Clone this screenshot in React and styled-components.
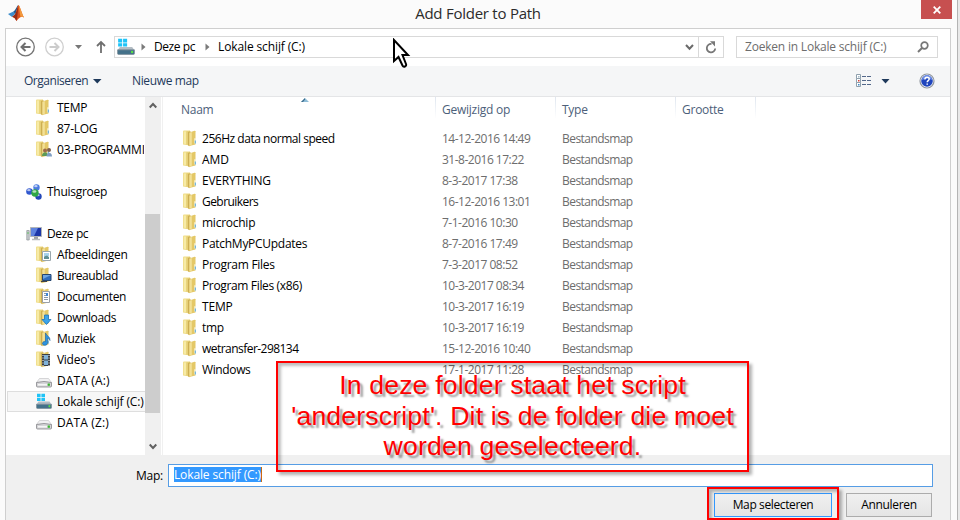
import React from 'react';
import styled, { createGlobalStyle, css } from 'styled-components';

const Global = createGlobalStyle`
  * { box-sizing: border-box; }
  body { margin: 0; overflow: hidden; }
`;

const Screen = styled.div`
  position: relative;
  width: 960px;
  height: 520px;
  overflow: hidden;
  display: flex;
  background: #e9e9e9;
  font-family: 'Open Sans', 'Noto Sans', sans-serif;
  font-size: 12px;
  line-height: 16px;
  letter-spacing: -0.25px;
  color: #000;
  white-space: nowrap;
`;
const Frame = styled.div`
  width: 958px;
  height: 520px;
  padding: 0 6px 0 5px;
  background: #fbfbfb;
  border-right: 1px solid #b4b4b4;
`;
const TitleBar = styled.header`
  display: grid;
  grid-template-columns: 30px 1fr 30px;
  height: 28px;
`;
const Logo = styled.svg`
  margin: 4px 0 0 2px;
`;
const Title = styled.h1`
  margin: 0;
  padding-top: 3px;
  text-align: center;
  font-size: 15px;
  line-height: 20px;
  font-weight: 400;
  letter-spacing: -0.25px;
  color: #2b2b2b;
`;
const CloseButton = styled.button`
  display: flex;
  align-items: center;
  justify-content: center;
  width: 31px;
  height: 19px;
  padding: 0;
  border: 0;
  background: #c75050;
`;
const Body = styled.div`
  display: flex;
  flex-direction: column;
  height: 492px;
  border: 1px solid #cfcfcf;
  border-bottom: 0;
  background: #fff;
`;
const NavBar = styled.nav`
  display: flex;
  height: 37px;
  padding: 7px 12px 0 10px;
`;
const NavIcons = styled.div`
  display: flex;
  width: 98px;
  height: 22px;
`;
const AddressBar = styled.div`
  display: flex;
  align-items: center;
  width: 610px;
  height: 22px;
  border: 1px solid #d9d9d9;
`;
const Crumb = styled.span`
  width: ${(p) => p.$w}px;
  margin-left: 8px;
  letter-spacing: ${(p) => p.$track || -0.25}px;
`;
const Chevron = styled.svg`
  flex: none;
  margin-left: ${(p) => p.$ml || 0}px;
`;
const RefreshBox = styled.div`
  display: flex;
  align-items: center;
  justify-content: center;
  width: 25px;
  height: 20px;
  margin-left: 4px;
  border-left: 1px solid #d9d9d9;
`;
const SearchBox = styled.div`
  display: flex;
  justify-content: space-between;
  align-items: center;
  width: 202px;
  height: 22px;
  margin-left: 12px;
  padding: 0 8px 0 8px;
  border: 1px solid #d9d9d9;
  letter-spacing: -0.2px;
  color: #6d6d6d;
`;
const ToolBar = styled.div`
  display: flex;
  align-items: center;
  height: 31px;
  padding: 0 15px 0 18px;
  background: #f5f6f7;
  border-bottom: 1px solid #e4e5e7;
  color: #1e395b;
`;
const ToolText = styled.span`
  width: ${(p) => p.$w}px;
  letter-spacing: ${(p) => p.$track}px;
`;
const ToolRight = styled.div`
  display: flex;
  align-items: center;
  margin-left: auto;
`;
const Panes = styled.main`
  display: flex;
  height: 358px;
`;
const Tree = styled.aside`
  width: 139px;
  overflow: hidden;
`;
const TreeRow = styled.div`
  display: flex;
  align-items: center;
  gap: ${(p) => (p.$root ? 4 : 5)}px;
  height: 21px;
  margin-left: 1px;
  padding-left: ${(p) => (p.$root ? 18 : 28)}px;
  border: 1px solid transparent;
  overflow: hidden;
  letter-spacing: ${(p) => p.$track || -0.28}px;
  ${(p) => p.$selected && css`
    background: #f7f7f7;
    border-color: #dedede;
    border-right: 0;
  `}
`;
const Gap = styled.div`
  height: 21px;
`;
const ScrollBar = styled.div`
  display: flex;
  flex-direction: column;
  align-items: center;
  width: 16px;
  padding: 5px 0;
  background: #f0f0f0;
`;
const Thumb = styled.div`
  width: 15px;
  height: 199px;
  margin: 105px 1px auto 0;
  background: #cdcdcd;
`;
const List = styled.section`
  flex: 1;
  margin-left: 1px;
  border-left: 1px solid #f0f0f0;
`;
const columns = css`
  display: grid;
  grid-template-columns: 273px 120px 120px 80px;
`;
const HeadRow = styled.div`
  ${columns}
  height: 31px;
  color: #4c607a;
`;
const HeadCell = styled.div`
  position: relative;
  height: 22px;
  padding: 5px 0 0 ${(p) => (p.$first ? 18 : 6)}px;
  background: linear-gradient(#dfe6ef, #fff) right / 1px 100% no-repeat;
`;
const SortMark = styled.svg`
  position: absolute;
  left: 138px;
  top: 1px;
`;
const Row = styled.div`
  ${columns}
  align-items: center;
  height: 21px;
`;
const NameCell = styled.div`
  display: flex;
  align-items: center;
  gap: 4px;
  padding-left: 20px;
  letter-spacing: ${(p) => p.$track || -0.28}px;
`;
const Cell = styled.div`
  padding-left: 6px;
  letter-spacing: ${(p) => p.$track}px;
  color: #6d6d6d;
`;
const Footer = styled.footer`
  flex: 1;
  background: #f0f0f0;
  padding-top: 9px;
`;
const Field = styled.label`
  display: flex;
  align-items: center;
  gap: 5px;
  padding-left: 130px;
`;
const Input = styled.div`
  display: flex;
  align-items: flex-start;
  width: 765px;
  height: 23px;
  padding: 2px 5px;
  background: #fff;
  border: 1px solid #569de5;
`;
const Selected = styled.span`
  height: 15px;
  line-height: 16px;
  background: #3399ff;
  border-right: 1px solid #c96a11;
  letter-spacing: -0.12px;
  color: #fff;
`;
const Buttons = styled.div`
  display: flex;
  gap: 14px;
  margin: 6px 0 0 708px;
`;
const Button = styled.button`
  width: ${(p) => p.$w}px;
  height: 24px;
  padding: 0;
  font: inherit;
  letter-spacing: ${(p) => (p.$primary ? -0.38 : -0.34)}px;
  color: #000;
  border: 1px solid ${(p) => (p.$primary ? '#3399ff' : '#acacac')};
  background: linear-gradient(#f0f0f0, #e5e5e5);
`;
const Callout = styled.div`
  position: absolute;
  left: 276px;
  top: 361px;
  width: 473px;
  height: 111px;
  padding-top: 7px;
  border: 2px solid #f00;
  box-shadow: 3px 3px 3px rgba(0, 0, 0, 0.3), inset 3px 3px 3px rgba(0, 0, 0, 0.25);
  font: 26.7px/30.5px 'Liberation Sans', Arial, sans-serif;
  letter-spacing: 0.13px;
  text-align: center;
  color: #f00;
  text-shadow: 3px 3px 2px rgba(0, 0, 0, 0.38);
`;
const Highlight = styled.div`
  position: absolute;
  left: 707px;
  top: 487px;
  width: 132px;
  height: 33px;
  border: 2px solid #f00;
  box-shadow: 3px 3px 3px rgba(0, 0, 0, 0.3), inset 3px 3px 3px rgba(0, 0, 0, 0.25);
`;
const Pointer = styled.svg`
  position: absolute;
  left: 392px;
  top: 38px;
`;
const Icon = styled.svg`
  flex: none;
  display: block;
`;

const FolderBase = () => (
  <>
    <path d="M0 1.300Q0 .5 1 .5h6v15L0 14.500z" fill="#efdc88" />
    <path d="M.8 1.500h2.500v12.600l-2.500-.4z" fill="#f7eba6" />
    <path d="M3.300 1.500L6.500.8v14.500l-3.200-.8z" fill="#e6cf75" />
    <path d="M5 2.300L7.500 1v14l-1.300 1.200L5 15.300z" fill="#cdae52" />
    <path d="M6.200 2.500L11.500.7q1-.2 1 .6v13.200l-6.300 1.600z" fill="#e4c867" />
    <path d="M6.500 3l2.300-.9v12.700l-2.300.6z" fill="#f2e097" />
    <path d="M11.300 8.300h1.500v5.200h-1.500z" fill="#faf5de" />
    <path d="M11.800 10.500h1v3h-1z" fill="#55a8df" />
  </>
);

const overlays = {
  people: (
    <>
      <circle cx="9" cy="9.500" r="2" fill="#9b6b48" /><path d="M6 15c0-5 6-5 6 0z" fill="#5c9a56" />
      <circle cx="13" cy="9" r="2" fill="#80604a" /><path d="M10.500 15.500c0-5 5.500-5 5.500 0z" fill="#7f9fc4" />
    </>
  ),
  picture: (
    <><path d="M6.500 5.500h8v9h-8z" fill="#fff" stroke="#9aa7ad" /><path d="M8 7h5v3H8z" fill="#a9d3ec" /><path d="M8 10.500l3-1 2 1.500v2H8z" fill="#5f9095" /></>
  ),
  desktop: (
    <><path d="M6.500 7.500h8.500v6H6.500z" fill="#2f6cbd" stroke="#24456f" /><path d="M7 8h8l-8 4z" fill="#6ea6e2" /><path d="M5 14.500h6" stroke="#444" /></>
  ),
  document: (
    <><path d="M6.500 3.500h7v11h-7z" fill="#fff" stroke="#9aa0a6" /><path d="M8 5.500h2M8 7.500h4M8 9.500h4M8 11.500h4" stroke="#8b98a6" /><path d="M10 5h2v3h-2z" fill="#3f86d4" /></>
  ),
  download: <path d="M8.500 6h4v4.500H15L10.500 15.500 6 10.500h2.500z" fill="#3ba4ea" stroke="#1c72b8" strokeWidth=".8" />,
  music: <path d="M9.500 3c1 3 5 3.500 4.500 7.500-1-1.500-1.500-2-2.500-2V13c0 3-5.500 3-5 .2.300-1.700 2-1.900 3-1.700z" fill="#2d93df" stroke="#17609f" strokeWidth=".6" />,
  video: (
    <><path d="M6 3h8v12H6z" fill="#3b4045" /><path d="M8 4h4v4.500H8zM8 9.500h4V14H8z" fill="#7fb2d9" /><path d="M7 4v11M13 4v11" stroke="#fff" strokeDasharray="1 1.500" /></>
  ),
};

const Folder = ({ kind }) => (
  <Icon width={kind ? 16 : 15} height="17" viewBox={kind ? '0 0 16 17' : '0 0 15 17'}>
    <FolderBase />
    {overlays[kind]}
  </Icon>
);

const Drive = ({ system, size = 16 }) => (
  <Icon width={size > 16 ? 18 : 16} height={size > 16 ? 18 : 17} viewBox="0 0 16 17" preserveAspectRatio="none">
    {system ? (
      <>
        <path d="M1 0.800h3.600v3.400H1zM5.400.8H9v3.400H5.400zM1 5h3.600v3H1zM5.400 5H9v3H5.400z" fill="#1fc3f7" />
        <path d="M2.500 8.500h11l2 3H.5z" fill="#b4bdc4" />
        <path d="M.5 11.200h15v3.600q0 .7-1 .7h-13q-1 0-1-.7z" fill="#44718a" stroke="#7d8d98" strokeWidth=".7" />
        <path d="M12.500 12.200h1.800v2h-1.800z" fill="#58e045" />
      </>
    ) : (
      <>
        <path d="M3.500 6.500h9l3 4h-15z" fill="#f1f1f2" stroke="#c5c5c8" strokeWidth=".7" />
        <path d="M.5 10.500q7.500-2 15 0v3.500q0 1-1 1h-13q-1 0-1-1z" fill="#d5d5d8" stroke="#85858a" strokeWidth=".8" />
        <path d="M2 12h9v1.500H2z" fill="#f5f5f5" /><path d="M11.700 11.500h2.200v2.300h-2.200z" fill="#35b52b" />
      </>
    )}
  </Icon>
);

const Homegroup = () => (
  <Icon width="17" height="16" viewBox="0 0 17 16">
    {[[10.5, 3.5, 3.2, '#4b7be0'], [3.5, 7.5, 3.3, '#3158cf'], [12.5, 12.5, 3.2, '#2347b8'], [9, 9, 3.7, '#2fa844']].map(([x, y, r, f]) => (
      <g key={x}><circle cx={x} cy={y} r={r} fill={f} /><ellipse cx={x - 0.6} cy={y - r * 0.4} rx={r * 0.55} ry={r * 0.35} fill="#fff" opacity=".65" /></g>
    ))}
  </Icon>
);

const Computer = () => (
  <Icon width="17" height="16" viewBox="0 0 17 16">
    <path d="M.8 4.500h2.400v9.500H.8z" fill="#c9cdd0" stroke="#8c9296" strokeWidth=".7" /><path d="M1.300 7h1.400" stroke="#3bc13b" />
    <path d="M4.500 1.500h11v9h-11z" fill="#1c36a8" stroke="#b0b4b8" /><path d="M5 2h7l-4 8H5z" fill="#5f83de" />
    <path d="M8 11h4v2H8z" fill="#9da1a5" /><path d="M6 13.500h8" stroke="#b8bbbe" strokeWidth="1.500" />
  </Icon>
);

const tree = [
  { name: 'TEMP', icon: <Folder kind="plain" /> },
  { name: '87-LOG', icon: <Folder kind="plain" /> },
  { name: '03-PROGRAMMI', icon: <Folder kind="people" />, track: -0.2 },
  null,
  { name: 'Thuisgroep', icon: <Homegroup />, root: true },
  null,
  { name: 'Deze pc', icon: <Computer />, root: true, track: -0.4 },
  { name: 'Afbeeldingen', icon: <Folder kind="picture" /> },
  { name: 'Bureaublad', icon: <Folder kind="desktop" />, track: -0.42 },
  { name: 'Documenten', icon: <Folder kind="document" />, track: -0.35 },
  { name: 'Downloads', icon: <Folder kind="download" />, track: -0.4 },
  { name: 'Muziek', icon: <Folder kind="music" /> },
  { name: "Video's", icon: <Folder kind="video" /> },
  { name: 'DATA (A:)', icon: <Drive />, track: 0.14 },
  { name: 'Lokale schijf (C:)', icon: <Drive system />, selected: true, track: -0.14 },
  { name: 'DATA (Z:)', icon: <Drive />, track: 0.14 },
];

const files = [
  ['256Hz data normal speed', '14-12-2016 14:49', -0.47],
  ['AMD', '31-8-2016 17:22', -0.1],
  ['EVERYTHING', '8-3-2017 17:38', -0.25],
  ['Gebruikers', '16-12-2016 13:01', -0.55],
  ['microchip', '7-1-2016 10:30', -0.25],
  ['PatchMyPCUpdates', '8-7-2016 17:49', -0.28],
  ['Program Files', '7-3-2017 08:52', -0.28],
  ['Program Files (x86)', '10-3-2017 08:34', -0.35],
  ['TEMP', '10-3-2017 16:19', -0.15],
  ['tmp', '10-3-2017 16:19', -0.35],
  ['wetransfer-298134', '15-12-2016 10:40', -0.54],
  ['Windows', '17-1-2017 11:28', -0.38],
];

const CrumbArrow = ({ ml }) => (
  <Chevron $ml={ml} width="5" height="8" viewBox="0 0 5 8"><path d="M.5 0.500l4 3.500-4 3.500z" fill="#7a7a7a" /></Chevron>
);

export default function App() {
  return (
    <Screen>
      <Global />
      <Frame>
        <TitleBar>
          <Logo width="18" height="18" viewBox="0 0 18 18">
            <path d="M1 10l5-2.200 2.500 2L5 13z" fill="#3d8ccb" />
            <path d="M6 7.800C8.500 7 9.500 2 11.500 1L8.500 10z" fill="#245a91" />
            <path d="M5 13l3-2.500C10 7 10 2.500 11.500 1 13 2 14.500 9 17 13.500c-2.500-1.500-4-.5-7.500 3.500-1-2-2.500-4.500-4.500-4z" fill="#d9501e" />
            <path d="M11.500 1c1.500 1 3 8 5.500 12.500-1.500-1-2.500-1-3.500-.5-1-3-1-9-2-12z" fill="#f39a3b" />
            <path d="M5 13l3-2.500c1.500-2 2-6 3-8 0 5-.5 10-1.500 14.500-1-2-2.500-4.500-4.500-4z" fill="#982b16" />
          </Logo>
          <Title>Add Folder to Path</Title>
          <CloseButton aria-label="Sluiten">
            <svg width="8" height="8" viewBox="0 0 8 8"><path d="M.7.7l6.600 6.600M7.300.7L.7 7.300" stroke="#fff" strokeWidth="1.800" /></svg>
          </CloseButton>
        </TitleBar>
        <Body>
          <NavBar>
            <NavIcons>
              <svg width="98" height="22" viewBox="0 0 98 22" fill="none">
                <circle cx="9.500" cy="11" r="8.800" stroke="#757575" strokeWidth="1.300" />
                <path d="M14.500 11H5.500M9.500 7l-4 4 4 4" stroke="#6f6f6f" strokeWidth="2" />
                <circle cx="38.500" cy="11" r="8.800" stroke="#cfcfcf" strokeWidth="1.300" />
                <path d="M33.500 11h9M38.500 7l4 4-4 4" stroke="#cccccc" strokeWidth="2" />
                <path d="M59 9h7l-3.500 4z" fill="#777" />
                <path d="M85 17V6M81 10l4-4 4 4" stroke="#6f6f6f" strokeWidth="1.800" />
              </svg>
            </NavIcons>
            <AddressBar>
              <Chevron as="span" $ml={2}><Drive system size={18} /></Chevron>
              <CrumbArrow ml={6} />
              <Crumb $w={45} $track={-0.42}>Deze pc</Crumb>
              <CrumbArrow ml={6} />
              <Crumb $w={467} $track={-0.12}>Lokale schijf (C:)</Crumb>
              <Chevron width="9" height="7" viewBox="0 0 9 7"><path d="M1 1l3.500 3.800L8 1" fill="none" stroke="#6a6a6a" strokeWidth="2" /></Chevron>
              <RefreshBox>
                <svg width="12" height="13" viewBox="0 0 12 13"><path d="M6.500 3A4.200 4.200 0 1 0 10.200 7.500" fill="none" stroke="#777" strokeWidth="1.800" /><path d="M5 .3h5v5.200z" fill="#777" /></svg>
              </RefreshBox>
            </AddressBar>
            <SearchBox>
              Zoeken in Lokale schijf (C:)
              <svg width="12" height="12" viewBox="0 0 12 12"><circle cx="7.500" cy="4.500" r="3.300" fill="none" stroke="#777" strokeWidth="1.700" /><path d="M5 7L1 11" stroke="#777" strokeWidth="2" /></svg>
            </SearchBox>
          </NavBar>
          <ToolBar>
            <ToolText $w={69} $track={-0.46}>Organiseren</ToolText>
            <svg width="39" height="5" viewBox="0 0 39 5"><path d="M0 0h8.500L4.300 4.500z" fill="#1e395b" /></svg>
            <ToolText $track={-0.36}>Nieuwe map</ToolText>
            <ToolRight>
              <svg width="63" height="14" viewBox="0 0 63 14">
                {[['#9fb8c8', 0], ['#d5433a', 4], ['#3e8bc8', 8]].map(([c, y]) => (
                  <g key={y}>
                    <path d={`M.5 ${y + 0.5}h4v4h-4z`} fill="#fff" stroke="#8fa0ad" />
                    <path d={`M2 ${y + 2}h1.500v1.500H2z`} fill={c} />
                    <path d={`M6 ${y + 2.5}h4M11 ${y + 2.5}h4`} stroke="#53688a" />
                  </g>
                ))}
                <path d="M25.500 5h8l-4 4.500z" fill="#1e395b" />
              </svg>
              <svg width="16" height="16" viewBox="0 0 16 16">
                <circle cx="8" cy="8" r="7" fill="#fff" stroke="#8e959e" strokeWidth="1.200" />
                <circle cx="8" cy="8" r="5.800" fill="#1f45bd" /><path d="M3 7a5 5 0 0 1 10 0q-5-3-10 0z" fill="#6d8de4" />
                <path d="M5.900 6.400c0-3 4.300-2.800 4.300-.4 0 1.600-2 1.500-2 3.200M8.200 10.400v1.400" fill="none" stroke="#fff" strokeWidth="1.500" />
              </svg>
            </ToolRight>
          </ToolBar>
          <Panes>
            <Tree>
              {tree.map((t, i) => t ? (
                <TreeRow key={i} $root={t.root} $selected={t.selected} $track={t.track}>{t.icon}<span>{t.name}</span></TreeRow>
              ) : <Gap key={i} />)}
            </Tree>
            <ScrollBar>
              <svg width="8" height="7" viewBox="0 0 8 7"><path d="M.7 5.500L4 2l3.300 3.500" fill="none" stroke="#606060" strokeWidth="2" /></svg>
              <Thumb />
              <svg width="8" height="7" viewBox="0 0 8 7"><path d="M.7 1.500L4 5l3.300-3.500" fill="none" stroke="#606060" strokeWidth="2" /></svg>
            </ScrollBar>
            <List>
              <HeadRow>
                <HeadCell $first>Naam
                  <SortMark width="8" height="4" viewBox="0 0 8 4"><path d="M0 4l4-4 4 4z" fill="#8fbdd8" /><path d="M0 4l4-4v1.500L2 4z" fill="#3c6c8c" /></SortMark>
                </HeadCell>
                <HeadCell>Gewijzigd op</HeadCell>
                <HeadCell>Type</HeadCell>
                <HeadCell>Grootte</HeadCell>
              </HeadRow>
              {files.map(([name, date, track]) => (
                <Row key={name}>
                  <NameCell $track={track}><Folder />{name}</NameCell>
                  <Cell $track={-0.5}>{date}</Cell>
                  <Cell $track={-0.55}>Bestandsmap</Cell>
                </Row>
              ))}
            </List>
          </Panes>
          <Footer>
            <Field>Map:<Input><Selected>Lokale schijf (C:)</Selected></Input></Field>
            <Buttons>
              <Button $w={118} $primary>Map selecteren</Button>
              <Button $w={86}>Annuleren</Button>
            </Buttons>
          </Footer>
        </Body>
      </Frame>
      <Callout>
        In deze folder staat het script<br />'anderscript'. Dit is de folder die moet<br />worden geselecteerd.
      </Callout>
      <Highlight />
      <Pointer width="20" height="32" viewBox="0 0 20 32">
        <path d="M2 2v21l4.500-4 4 8.500c1 2 4.500 1 3.500-1.500L10.500 17H16z" fill="#fff" stroke="#000" strokeWidth="2" />
      </Pointer>
    </Screen>
  );
}
